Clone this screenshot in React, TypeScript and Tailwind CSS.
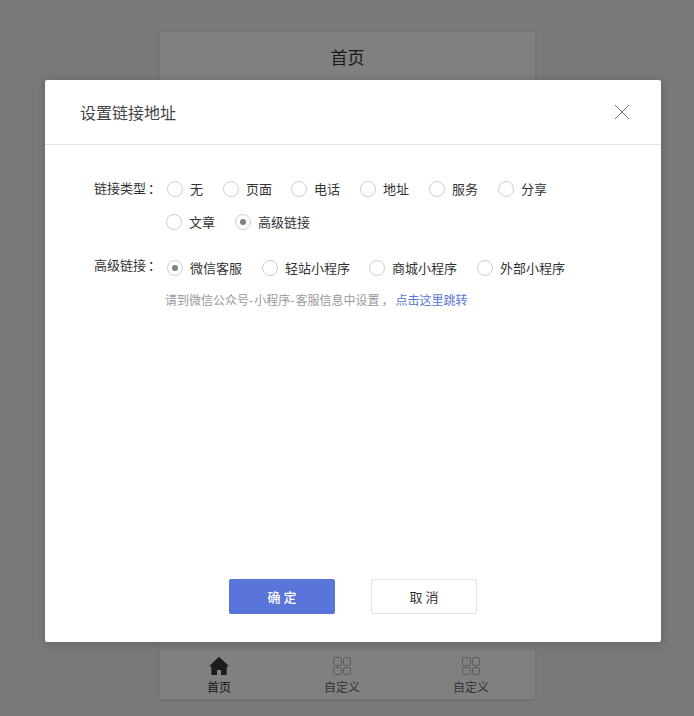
import { useState } from 'react'

const linkTypes = [
  [
    { label: '无', pos: 'ml-[2px] w-[56px]' },
    { label: '页面', pos: 'w-[68px]' },
    { label: '电话', pos: 'w-[69px]' },
    { label: '地址', pos: 'w-[69px]' },
    { label: '服务', pos: 'w-[69px]' },
    { label: '分享', pos: 'w-[60px]' },
  ],
  [
    { label: '文章', pos: 'ml-[1px] w-[69px]' },
    { label: '高级链接', pos: 'w-[90px]' },
  ],
]

const advancedLinks = [
  { label: '微信客服', pos: 'ml-[2px] w-[95px]' },
  { label: '轻站小程序', pos: 'w-[107px]' },
  { label: '商城小程序', pos: 'w-[108px]' },
  { label: '外部小程序', pos: 'w-[100px]' },
]

type RadioProps = {
  label: string
  pos: string
  checked: boolean
  onSelect: () => void
}

const Radio = ({ label, pos, checked, onSelect }: RadioProps) => (
  <button
    type="button"
    role="radio"
    aria-checked={checked}
    onClick={onSelect}
    className={`flex h-4 shrink-0 items-center gap-[7px] whitespace-nowrap text-[13px] leading-4 ${pos}`}
  >
    <span className="flex size-4 shrink-0 items-center justify-center rounded-full border border-[#cfcfcf]">
      {checked && <span className="size-[6px] rounded-full bg-[#808080]" />}
    </span>
    <span className="pb-px">{label}</span>
  </button>
)

const HomeIcon = () => (
  <svg width="20" height="20" viewBox="0 0 20 20" fill="#1b1b1b">
    <path d="M10 0.8 L19.2 9.4 V10.4 H17.7 V18 Q17.7 19 16.7 19 H12 V14 H8 V19 H3.3 Q2.3 19 2.3 18 V10.4 H0.8 V9.4 Z" />
  </svg>
)

const GridIcon = () => (
  <svg width="20" height="20" viewBox="0 0 20 20" fill="none" stroke="#585858">
    <rect x="1.5" y="1.5" width="8" height="8" rx="2" />
    <rect x="11.5" y="1.5" width="7" height="8" rx="2" />
    <rect x="1.5" y="11.5" width="8" height="7" rx="2" />
    <rect x="11.5" y="11.5" width="7" height="7" rx="2" />
  </svg>
)

const App = () => {
  const [type, setType] = useState('高级链接')
  const [advanced, setAdvanced] = useState('微信客服')

  return (
    <div className="relative h-[716px] w-[694px] overflow-hidden bg-[#797979] font-['Noto_Sans_CJK_SC',sans-serif]">
      {/* Phone preview */}
      <div className="flex h-full flex-col pt-8 pb-[17px] pl-[160px]">
        <div className="flex w-[375px] flex-1 flex-col justify-between bg-[#7a7a7a] shadow-[0_1px_3px_rgba(0,0,0,0.1)]">
          <div className="flex h-[50px] items-center justify-center bg-[#808080] text-[17px] text-[#1a1a1a]">
            首页
          </div>
          <div className="flex h-[49px] bg-[#808080] text-xs leading-[18px] text-[#333]">
            <div className="flex w-[118px] flex-col items-center pt-[6px] text-[#151515]">
              <HomeIcon />
              <span className="mt-[2px]">首页</span>
            </div>
            <div className="flex w-[128px] flex-col items-center pt-[6px]">
              <GridIcon />
              <span className="mt-[2px]">自定义</span>
            </div>
            <div className="ml-px flex w-[128px] flex-col items-center pt-[6px]">
              <GridIcon />
              <span className="mt-[2px]">自定义</span>
            </div>
          </div>
        </div>
      </div>

      {/* Dialog */}
      <div className="absolute top-20 left-[45px] flex h-[562px] w-[616px] flex-col rounded-[2px] bg-white text-[#333] shadow-[1px_1px_10px_rgba(0,0,0,0.2)]">
        <div className="flex h-[65px] items-center justify-between border-b border-[#e2e2e2] pr-[31px] pl-[35px]">
          <h2 className="text-base leading-6 text-[#444]">设置链接地址</h2>
          <button type="button" aria-label="关闭">
            <svg width="16" height="16" viewBox="0 0 16 16" stroke="#777">
              <path d="M1 1 L15 15 M15 1 L1 15" />
            </svg>
          </button>
        </div>

        <div className="flex-1 pt-9 pl-[49px] text-[13px] leading-4">
          <div className="flex">
            <div className="-mt-px w-[71px]">
              链接类型<span className="pl-[2px]">：</span>
            </div>
            <div className="flex flex-col gap-[17px]">
              {linkTypes.map((row, i) => (
                <div key={i} className="flex">
                  {row.map((item) => (
                    <Radio key={item.label} {...item} checked={type === item.label} onSelect={() => setType(item.label)} />
                  ))}
                </div>
              ))}
            </div>
          </div>

          <div className="mt-[28px] flex">
            <div className="-mt-px w-[71px]">
              高级链接<span className="pl-[2px]">：</span>
            </div>
            <div className="pt-[2px]">
              <div className="flex">
                {advancedLinks.map((item) => (
                  <Radio key={item.label} {...item} checked={advanced === item.label} onSelect={() => setAdvanced(item.label)} />
                ))}
              </div>
              <p className="mt-4 text-xs leading-4 text-[#999]">
                请到微信公众号<span className="tracking-[1px]">-</span>小程序<span className="tracking-[1px]">-</span>客服信息中设置
                <span className="mr-[2px] pl-[2px]">，</span>
                <a href="#" className="text-[#5675da]">点击这里跳转</a>
              </p>
            </div>
          </div>
        </div>

        <div className="flex gap-9 pb-7 pl-[184px] text-[13px]">
          <button type="button" className="h-[35px] w-[106px] rounded-[2px] bg-[#5975da] font-medium text-white">
            确 定
          </button>
          <button type="button" className="h-[35px] w-[106px] rounded-[2px] border border-[#e2e3e8]">
            取 消
          </button>
        </div>
      </div>
    </div>
  )
}

export default App
